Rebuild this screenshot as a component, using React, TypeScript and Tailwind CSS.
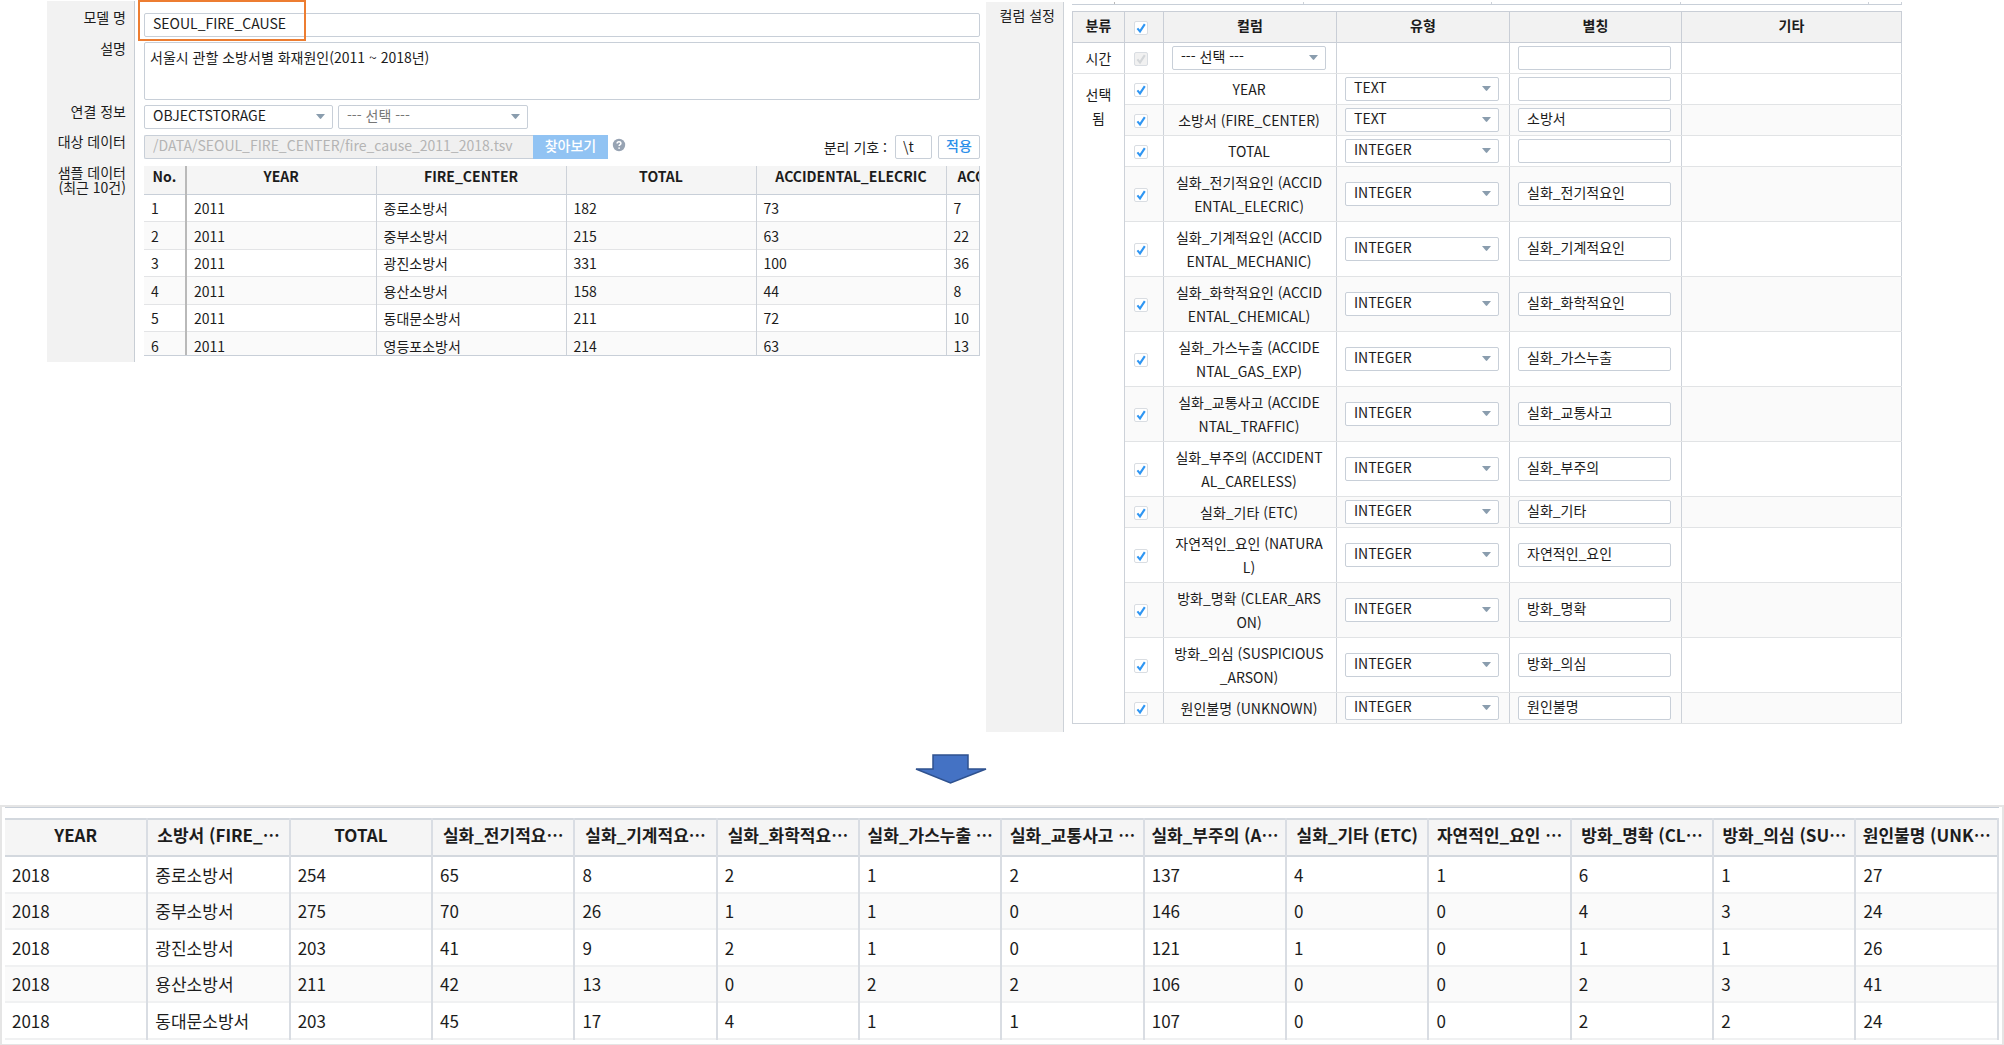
import React from "react";

const sampleHeaders = ["YEAR", "FIRE_CENTER", "TOTAL", "ACCIDENTAL_ELECRIC", "ACCIDENTAL_MECHANIC"];

const sampleRows: string[][] = [
  ["1", "2011", "종로소방서", "182", "73", "7"],
  ["2", "2011", "중부소방서", "215", "63", "22"],
  ["3", "2011", "광진소방서", "331", "100", "36"],
  ["4", "2011", "용산소방서", "158", "44", "8"],
  ["5", "2011", "동대문소방서", "211", "72", "10"],
  ["6", "2011", "영등포소방서", "214", "63", "13"],
];

const columns: { name: string; type: string; alias: string }[] = [
  { name: "YEAR", type: "TEXT", alias: "" },
  { name: "소방서 (FIRE_CENTER)", type: "TEXT", alias: "소방서" },
  { name: "TOTAL", type: "INTEGER", alias: "" },
  { name: "실화_전기적요인 (ACCIDENTAL_ELECRIC)", type: "INTEGER", alias: "실화_전기적요인" },
  { name: "실화_기계적요인 (ACCIDENTAL_MECHANIC)", type: "INTEGER", alias: "실화_기계적요인" },
  { name: "실화_화학적요인 (ACCIDENTAL_CHEMICAL)", type: "INTEGER", alias: "실화_화학적요인" },
  { name: "실화_가스누출 (ACCIDENTAL_GAS_EXP)", type: "INTEGER", alias: "실화_가스누출" },
  { name: "실화_교통사고 (ACCIDENTAL_TRAFFIC)", type: "INTEGER", alias: "실화_교통사고" },
  { name: "실화_부주의 (ACCIDENTAL_CARELESS)", type: "INTEGER", alias: "실화_부주의" },
  { name: "실화_기타 (ETC)", type: "INTEGER", alias: "실화_기타" },
  { name: "자연적인_요인 (NATURAL)", type: "INTEGER", alias: "자연적인_요인" },
  { name: "방화_명확 (CLEAR_ARSON)", type: "INTEGER", alias: "방화_명확" },
  { name: "방화_의심 (SUSPICIOUS_ARSON)", type: "INTEGER", alias: "방화_의심" },
  { name: "원인불명 (UNKNOWN)", type: "INTEGER", alias: "원인불명" },
];

const resultHeaders: { text: string; more?: boolean }[] = [
  { text: "YEAR" },
  { text: "소방서 (FIRE_", more: true },
  { text: "TOTAL" },
  { text: "실화_전기적요", more: true },
  { text: "실화_기계적요", more: true },
  { text: "실화_화학적요", more: true },
  { text: "실화_가스누출 ", more: true },
  { text: "실화_교통사고 ", more: true },
  { text: "실화_부주의 (A", more: true },
  { text: "실화_기타 (ETC)" },
  { text: "자연적인_요인 ", more: true },
  { text: "방화_명확 (CL", more: true },
  { text: "방화_의심 (SU", more: true },
  { text: "원인불명 (UNK", more: true },
];

const resultRows: string[][] = [
  ["2018", "종로소방서", "254", "65", "8", "2", "1", "2", "137", "4", "1", "6", "1", "27"],
  ["2018", "중부소방서", "275", "70", "26", "1", "1", "0", "146", "0", "0", "4", "3", "24"],
  ["2018", "광진소방서", "203", "41", "9", "2", "1", "0", "121", "1", "0", "1", "1", "26"],
  ["2018", "용산소방서", "211", "42", "13", "0", "2", "2", "106", "0", "0", "2", "3", "41"],
  ["2018", "동대문소방서", "203", "45", "17", "4", "1", "1", "107", "0", "0", "2", "2", "24"],
];

const box = "h-6 rounded-[2px] border border-[#c8cfd8] bg-white px-2 pb-1 leading-[18px] outline-none";

function Select({ id, label, options, muted }: { id?: string; label?: string; options: string[]; muted?: boolean }) {
  return (
    <div className="relative w-full">
      <select
        id={id}
        aria-label={label}
        className={`${box} block w-full appearance-none ${muted ? "text-[#777]" : "text-[#1c1c1c]"}`}
      >
        {options.map((o) => (
          <option key={o}>{o}</option>
        ))}
      </select>
      <svg className="pointer-events-none absolute top-[9px] right-2 h-[5px] w-[9px]" viewBox="0 0 9 5" aria-hidden="true">
        <path d="M0 0H9L5.2 4.6Q4.5 5.2 3.8 4.6Z" fill="#8a9dae" />
      </svg>
    </div>
  );
}

function Check({ label, disabled }: { label: string; disabled?: boolean }) {
  return (
    <div className="relative mr-1.5 mb-0.5 inline-block size-3.5 align-middle">
      <input
        type="checkbox"
        aria-label={label}
        defaultChecked
        disabled={disabled}
        className="block size-3.5 appearance-none rounded-[2px] border border-[#d9dde2] bg-white disabled:bg-[#f1f1f1]"
      />
      <svg className="pointer-events-none absolute inset-0 size-3.5" viewBox="0 0 14 14" aria-hidden="true">
        <path
          d="M3.4 7.4L6 10.4L10.8 3.2"
          fill="none"
          stroke={disabled ? "#d3d6d9" : "#2f96f3"}
          strokeWidth="2.1"
        />
      </svg>
    </div>
  );
}

function FieldRow({ label, id, pad, children }: { label: React.ReactNode; id?: string; pad: string; children: React.ReactNode }) {
  return (
    <div className="flex">
      <label htmlFor={id} className={`w-[88px] shrink-0 border-r border-[#c8ced5] bg-[#f2f2f2] pr-2 text-right leading-[15px] ${pad}`}>
        {label}
      </label>
      <div className="min-w-0 flex-1 pl-[9px]">{children}</div>
    </div>
  );
}

function ModelForm() {
  return (
    <section className="pt-px">
      <FieldRow label="모델 명" id="model" pad="pt-[9px]">
        <div className="relative pt-3 pb-0.5">
          <input id="model" defaultValue="SEOUL_FIRE_CAUSE" className={`${box} block w-full`} />
          <div className="pointer-events-none absolute -top-px -left-1.5 h-[41px] w-[168px] border-2 border-[#ed7d31]" />
        </div>
      </FieldRow>
      <FieldRow label="설명" id="desc" pad="pt-0.5">
        <div className="pt-[3px] pb-0.5">
          <textarea
            id="desc"
            defaultValue="서울시 관할 소방서별 화재원인(2011 ~ 2018년)"
            className="block h-[58px] w-full resize-none rounded-[2px] border border-[#c8cfd8] px-[5px] pt-1 leading-5 outline-none"
          />
        </div>
      </FieldRow>
      <FieldRow label="연결 정보" id="conn" pad="pt-0.5">
        <div className="flex gap-[5px] py-[3px]">
          <div className="w-[189px]">
            <Select id="conn" options={["OBJECTSTORAGE"]} />
          </div>
          <div className="w-[190px]">
            <Select label="연결 선택" options={["--- 선택 ---"]} muted />
          </div>
        </div>
      </FieldRow>
      <FieldRow label="대상 데이터" id="path" pad="pt-0.5">
        <div className="flex items-center py-[3px]">
          <input
            id="path"
            readOnly
            defaultValue="/DATA/SEOUL_FIRE_CENTER/fire_cause_2011_2018.tsv"
            className="h-6 w-[389px] rounded-l-[2px] border border-r-0 border-[#c8cfd8] bg-[#f0f0f0] px-2 pb-1 leading-[18px] text-[#b4b4b4] outline-none"
          />
          <button type="button" className="h-6 w-[75px] bg-[#91c3f3] pb-1 leading-5 font-medium text-white">
            찾아보기
          </button>
          <svg className="mb-1 ml-1 size-3.5" viewBox="0 0 14 14" aria-hidden="true">
            <circle cx="7" cy="7" r="6.2" fill="#97a3b3" />
            <path d="M5.1 5.6C5.1 4.4 5.9 3.7 7 3.7S8.9 4.4 8.9 5.4C8.9 6.6 7.1 6.7 7.1 8.1" fill="none" stroke="#fff" strokeWidth="1.5" />
            <circle cx="7.1" cy="10.1" r="0.9" fill="#fff" />
          </svg>
          <label htmlFor="sep" className="ml-auto pr-2">
            분리 기호 :
          </label>
          <input id="sep" defaultValue="\t" className="mr-1.5 h-6 w-[37px] rounded-[2px] border border-[#c8cfd8] px-[7px] pb-0.5 leading-5 outline-none" />
          <button type="button" className="h-6 w-[42px] rounded-[2px] border border-[#c8cfd8] bg-white pb-1 leading-[18px] font-medium text-[#2b8fe9]">
            적용
          </button>
        </div>
      </FieldRow>
      <FieldRow
        label={
          <>
            샘플 데이터
            <br />
            (최근 10건)
          </>
        }
        pad="pt-[3px]"
      >
        <div className="pt-1 pb-1.5">
          <div className="h-[190px] overflow-hidden border-r border-b border-[#c8cfd8]">
            <table className="w-[992px] table-fixed border-collapse">
              <thead>
                <tr className="h-7 border-b border-[#c8cfd8] bg-[#f5f5f5]">
                  <th className="w-[42px] border-r-2 border-[#b9b9b9] pb-2 leading-5 font-bold">No.</th>
                  {sampleHeaders.map((h) => (
                    <th key={h} className="w-[190px] border-r border-[#cdd2d9] pb-2 leading-5 font-bold">
                      {h}
                    </th>
                  ))}
                </tr>
              </thead>
              <tbody>
                {sampleRows.map((r) => (
                  <tr key={r[0]} className="border-b border-[#e3e4e6] odd:h-[27px] even:h-7 even:bg-[#fafafa]">
                    {r.map((c, i) => (
                      <td
                        key={i}
                        className={
                          i === 0
                            ? "border-r-2 border-r-[#b9b9b9] pl-[7px] leading-5"
                            : "border-r border-r-[#cdd2d9] pl-[7px] leading-5"
                        }
                      >
                        {c}
                      </td>
                    ))}
                  </tr>
                ))}
              </tbody>
            </table>
          </div>
        </div>
      </FieldRow>
    </section>
  );
}

function ColumnSettings() {
  const edge = "border-x border-x-[#cdd2d9] border-y border-y-[#e1e3e5]";
  const head = "border border-[#c9ced6] pb-1 font-bold";
  return (
    <section className="flex pt-0.5">
      <h2 className="w-[78px] shrink-0 border-r border-[#cdd2d8] bg-[#f2f2f2] pt-[5px] pr-2 text-right leading-[17px]">컬럼 설정</h2>
      <div className="min-w-0 flex-1 pb-2 pl-2">
        <div className="mb-1.5 flex h-[3px] border-b border-[#c8cfd8]" aria-hidden="true">
          <div className="w-[43px] border-r border-[#b9b9b9]" />
          <div className="flex-1 border-r border-[#cdd2d9]" />
          <div className="flex-1 border-r border-[#cdd2d9]" />
          <div className="flex-1 border-r border-[#cdd2d9]" />
          <div className="flex-1 border-r border-[#cdd2d9]" />
          <div className="w-[33px] border-r border-[#cdd2d9]" />
        </div>
        <table className="w-full table-fixed border-collapse text-center">
          <colgroup>
            <col className="w-[52px]" />
            <col className="w-[39px]" />
            <col className="w-[173px]" />
            <col className="w-[173px]" />
            <col className="w-[172px]" />
            <col />
          </colgroup>
          <thead>
            <tr className="h-[31px] bg-[#f2f2f2]">
              <th className={head}>분류</th>
              <th className="border border-[#c9ced6]">
                <Check label="전체 선택" />
              </th>
              <th className={head}>컬럼</th>
              <th className={head}>유형</th>
              <th className={head}>별칭</th>
              <th className={head}>기타</th>
            </tr>
          </thead>
          <tbody>
            <tr className="h-[31px]">
              <td className={edge}>시간</td>
              <td className={edge}>
                <Check label="시간" disabled />
              </td>
              <td className={`${edge} pr-2.5 pl-2 text-left`}>
                <Select label="시간 컬럼" options={["--- 선택 ---"]} />
              </td>
              <td className={edge} />
              <td className={`${edge} pr-2.5 pl-2`}>
                <input aria-label="시간 별칭" className={`${box} block w-full`} />
              </td>
              <td className={edge} />
            </tr>
            {columns.map((c, i) => (
              <tr key={c.name} className={i % 2 ? "bg-[#fafafa]" : "bg-white"}>
                {i === 0 && (
                  <td rowSpan={columns.length} className="border border-[#cdd2d9] bg-white px-2 pt-2 align-top leading-6 break-all">
                    선택됨
                  </td>
                )}
                <td className={edge}>
                  <Check label={c.name} />
                </td>
                <td className={`${edge} py-[3px] pr-3 pl-2.5 leading-6 break-all`}>{c.name}</td>
                <td className={`${edge} pr-2.5 pl-2 text-left`}>
                  <Select label={`${c.name} 유형`} options={[c.type]} />
                </td>
                <td className={`${edge} pr-2.5 pl-2`}>
                  <input aria-label={`${c.name} 별칭`} defaultValue={c.alias} className={`${box} block w-full`} />
                </td>
                <td className={edge} />
              </tr>
            ))}
          </tbody>
        </table>
      </div>
    </section>
  );
}

function ResultTable() {
  return (
    <section className="border-2 border-[#e5e5e5] px-[3px] pb-1 text-[17px]">
      <div className="mb-2.5 h-px bg-[#c8cfd8]" />
      <table className="w-full table-fixed border-collapse">
        <thead>
          <tr className="h-[37px] border-y-2 border-[#d3d8de] bg-[#f5f5f5]">
            {resultHeaders.map((h) => (
              <th key={h.text} className="overflow-hidden border-r-2 border-r-[#d9dde3] pb-1.5 leading-7 font-bold whitespace-pre">
                {h.text}
                {h.more && <span className="inline-block">⋯</span>}
              </th>
            ))}
          </tr>
        </thead>
        <tbody>
          {resultRows.map((r) => (
            <tr key={r[1]} className="border-b-2 border-[#f0f1f2] odd:h-[37px] even:h-9 even:bg-[#fafafa]">
              {r.map((c, i) => (
                <td key={i} className="border-r-2 border-r-[#d9dde3] pl-[7px] leading-7">
                  {c}
                </td>
              ))}
            </tr>
          ))}
        </tbody>
      </table>
    </section>
  );
}

export default function App() {
  return (
    <main lang="ko" className="bg-white font-['Noto_Sans_CJK_KR',sans-serif] text-sm text-[#1c1c1c]">
      <div className="grid grid-cols-[minmax(0,933fr)_minmax(0,916fr)] items-start gap-1.5 pr-[102px] pl-[47px]">
        <ModelForm />
        <ColumnSettings />
      </div>
      <div className="flex justify-center pt-[22px] pr-[102px] pb-[21px]">
        <svg className="h-[30px] w-[78px]" viewBox="0 0 78 30" aria-hidden="true">
          <path d="M21 1H56V15H74L38.5 29L4 15H21Z" fill="#4472c4" stroke="#2f528f" strokeWidth="1.5" />
        </svg>
      </div>
      <ResultTable />
    </main>
  );
}
